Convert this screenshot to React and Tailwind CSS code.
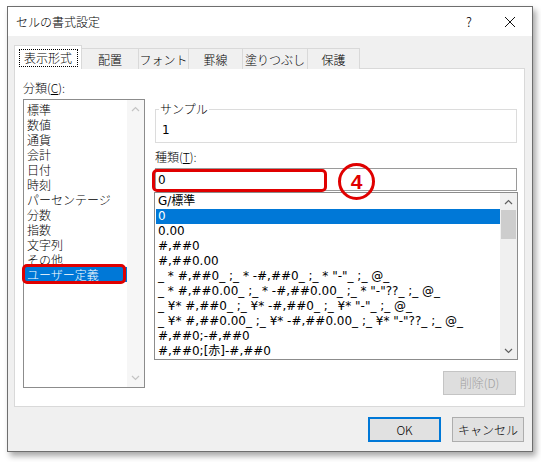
import React from "react";

const FONT = { fontFamily: "'Noto Sans CJK JP', 'Noto Sans', sans-serif" };
const LIST_FONT = { fontFamily: "'DejaVu Sans', 'Noto Sans CJK JP', sans-serif" };

const categories = [
  "標準",
  "数値",
  "通貨",
  "会計",
  "日付",
  "時刻",
  "パーセンテージ",
  "分数",
  "指数",
  "文字列",
  "その他",
  "ユーザー定義",
];

const formats = [
  "G/標準",
  "0",
  "0.00",
  "#,##0",
  "#,##0.00",
  '_ * #,##0_ ;_ * -#,##0_ ;_ * "-"_ ;_ @_',
  '_ * #,##0.00_ ;_ * -#,##0.00_ ;_ * "-"??_ ;_ @_',
  '_ ¥* #,##0_ ;_ ¥* -#,##0_ ;_ ¥* "-"_ ;_ @_',
  '_ ¥* #,##0.00_ ;_ ¥* -#,##0.00_ ;_ ¥* "-"??_ ;_ @_',
  "#,##0;-#,##0",
  "#,##0;[赤]-#,##0",
];

function Chevron({ up, color }) {
  return (
    <svg width="9" height="6" viewBox="0 0 9 6">
      <path
        d={up ? "M1 5 L4.5 1.5 L8 5" : "M1 1 L4.5 4.5 L8 1"}
        fill="none"
        stroke={color}
        strokeWidth="1.2"
      />
    </svg>
  );
}

function Tab({ label, w }) {
  return (
    <div
      className={`${w} h-[21px] bg-[#f0f0f0] border-t border-r border-[#d9d9d9] flex items-center justify-center text-[12px] leading-[15px] text-black`}
    >
      {label}
    </div>
  );
}

export default function App() {
  return (
    <div className="w-[541px] h-[462px] bg-white pt-[6px] pl-[7px] font-light" style={FONT}>
      <div className="relative w-[526px] h-[446px] border border-[#6e6e6e] flex flex-col shadow-[3px_4px_6px_rgba(0,0,0,0.35)]">
        {/* title bar */}
        <div className="h-[29px] bg-white flex items-center pl-[8px] text-[12px] text-black">
          <span className="flex-1 leading-[16px]">セルの書式設定</span>
          <span className="w-[14px] text-[13px] leading-[16px] mr-[28px] text-center">?</span>
          <svg width="12" height="12" viewBox="0 0 12 12" className="mr-[16px]">
            <path d="M1 1 L11 11 M11 1 L1 11" stroke="#111" strokeWidth="1" />
          </svg>
        </div>

        {/* body */}
        <div className="flex-1 bg-[#f0f0f0] pt-[9px] pl-[6px] pr-[7px] pb-[9px] flex flex-col">
          {/* tabs */}
          <div className="h-[24px] flex items-end relative z-10">
            <div className="w-[68px] h-[24px] bg-white border-t border-l border-r border-[#d9d9d9] flex items-center justify-center">
              <div className="w-[59px] h-[18px] border border-dotted border-black flex items-center justify-center text-[12px] leading-[15px] text-black">
                表示形式
              </div>
            </div>
            <Tab label="配置" w="w-[57px]" />
            <Tab label="フォント" w="w-[50px]" />
            <Tab label="罫線" w="w-[54px]" />
            <Tab label="塗りつぶし" w="w-[65px]" />
            <Tab label="保護" w="w-[52px]" />
          </div>

          {/* panel */}
          <div className="-mt-px h-[339px] bg-white border border-[#d9d9d9] flex items-start text-[12px] text-black relative">
            {/* left column */}
            <div className="ml-[8px] mt-[11px] flex flex-col">
              <div className="leading-[16px] h-[16px]">
                分類(<span className="underline">C</span>):
              </div>
              <div className="mt-[3px] w-[122px] h-[289px] border border-[#8c8c8c] flex relative">
                <div className="flex-1 pt-[2px] flex flex-col">
                  {categories.map((c, i) => (
                    <div
                      key={c}
                      className={`h-[15px] leading-[15px] pl-[3px] whitespace-nowrap ${
                        i === 11 ? "bg-[#0078d7] text-white" : ""
                      }`}
                    >
                      {c}
                    </div>
                  ))}
                </div>
                <div className="w-[17px] bg-[#f6f6f6] flex flex-col justify-between items-center py-[6px]">
                  <Chevron up color="#c4c4c4" />
                  <Chevron color="#c4c4c4" />
                </div>
                {/* annotation */}
                <div className="absolute left-[-2px] top-[164px] w-[104px] h-[20px] border-[3px] border-[#e00000] rounded-[5px]" />
              </div>
            </div>

            {/* right column */}
            <div className="ml-[9px] mt-[40px] w-[364px] flex flex-col">
              <div className="ml-px w-[362px] h-[34px] border border-[#dcdcdc] relative pt-[12px] pl-[6px]">
                <span className="absolute -top-[9px] left-[3px] bg-white px-px leading-[16px]">
                  サンプル
                </span>
                <div className="leading-[16px] font-normal" style={LIST_FONT}>1</div>
              </div>
              <div className="mt-[6px] ml-px leading-[16px] h-[16px]">
                種類(<span className="underline">T</span>):
              </div>
              <div className="mt-[3px] ml-px w-[362px] h-[23px] border border-[#9a9a9a] flex items-center pl-[2px] relative">
                <span className="leading-[16px] font-normal" style={LIST_FONT}>0</span>
                {/* annotation box */}
                <div className="absolute left-[-4px] top-0 w-[175px] h-[23px] border-[3px] border-[#e00000] rounded-[5px]" />
                {/* annotation circle */}
                <div className="absolute left-[182px] -top-[6px] w-[37px] h-[37px] border-[3px] border-[#e00000] rounded-full flex items-center justify-center">
                  <span
                    className="text-[21px] leading-[21px] font-bold text-[#e00000]"
                    style={{ fontFamily: "'Liberation Sans', Arial, sans-serif" }}
                  >
                    4
                  </span>
                </div>
              </div>
              <div className="mt-px w-[364px] h-[168px] border border-[#8c8c8c] flex">
                <div className="flex-1 pt-px pl-px flex flex-col overflow-hidden font-normal" style={LIST_FONT}>
                  {formats.map((f, i) => (
                    <div
                      key={f}
                      className={`h-[15px] leading-[15px] pl-[2px] whitespace-pre ${
                        i === 1 ? "bg-[#0078d7] text-white" : ""
                      }`}
                    >
                      {f}
                    </div>
                  ))}
                </div>
                <div className="w-[17px] bg-[#f0f0f0] flex flex-col items-center">
                  <div className="h-[17px] w-full flex items-center justify-center">
                    <Chevron up color="#606060" />
                  </div>
                  <div className="w-[15px] h-[29px] bg-[#cdcdcd]" />
                  <div className="flex-1" />
                  <div className="h-[17px] w-full flex items-center justify-center">
                    <Chevron color="#606060" />
                  </div>
                </div>
              </div>
              <div className="mt-[11px] self-end mr-[2px] w-[73px] h-[24px] bg-[#dedede] border border-[#c4c4c4] flex items-center justify-center text-[#a0a0a0] leading-[16px]">
                削除(D)
              </div>
            </div>
          </div>

          {/* footer */}
          <div className="mt-[10px] flex justify-end gap-[11px] pr-px">
            <div className="w-[73px] h-[25px] bg-[#e1e1e1] border-2 border-[#0078d7] flex items-center justify-center text-[12px] leading-[16px] text-black">
              OK
            </div>
            <div className="w-[72px] h-[25px] bg-[#e1e1e1] border border-[#adadad] flex items-center justify-center text-[12px] leading-[16px] text-black">
              キャンセル
            </div>
          </div>
        </div>
      </div>
    </div>
  );
}
